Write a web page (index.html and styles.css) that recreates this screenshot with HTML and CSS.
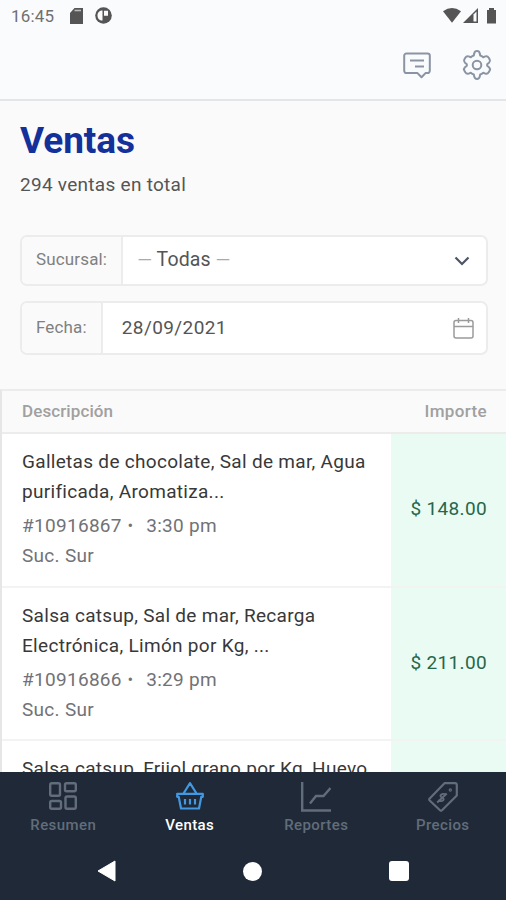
FILE: index.html
```html
<!DOCTYPE html>
<html lang="es">
<head>
    <meta charset="UTF-8">
    <title>Ventas</title>
    <link rel="stylesheet" href="styles.css">
</head>
<body>
    <div id="app">
        <header id="top">
            <div class="status">
                <span class="clock">16:45</span>
                <svg class="sd" width="14" height="16" viewBox="0 0 14 16"><path d="M4.5 0H13v16H0V5z" fill="#555"/><path d="M4.5 2.5H11" stroke="#bbb" stroke-width="1.6"/></svg>
                <svg class="dot" width="17" height="17" viewBox="0 0 17 17"><circle cx="8.5" cy="8.5" r="8.3" fill="#555"/><path d="M7.5 3.5v10C4.500 13.500 2.500 11.500 2.500 8.500S4.500 3.500 7.500 3.500zM9 3.800h4v5H9z" fill="#fafbfd"/></svg>
                <svg class="signals" width="54" height="16" viewBox="0 0 54 16">
                    <path d="M0 3.200Q9 -3 18 3.200L9 14.800z" fill="#555"/>
                    <path d="M20 15L35 0v15z" fill="#555"/>
                    <path d="M30.500 6.500L33.500 3.500V13.500H30.500z" fill="#fafbfd"/>
                    <path d="M44 2h2V0h5v2h2v13.500h-9z" fill="#555"/>
                </svg>
            </div>
            <div class="actions">
                <svg width="28" height="27" viewBox="0 0 28 27" fill="none" stroke="#8b94a3" stroke-width="2" stroke-linejoin="round">
                    <path d="M3.500 1.500h21a2.300 2.300 0 0 1 2.300 2.300v15a2.300 2.300 0 0 1-2.300 2.300H22.500l-4 4.200-4-4.200h-11a2.300 2.300 0 0 1-2.300-2.300v-15a2.300 2.300 0 0 1 2.300-2.300z"/>
                    <path d="M7 8.500h14M12 14.500h9"/>
                </svg>
                <svg width="30" height="30" viewBox="0 0 30 30" fill="none" stroke="#8b94a3" stroke-width="2" stroke-linejoin="round">
                    <path d="M12.300 3.300Q12.700 1 15 1T17.700 3.300L18.200 5.500Q19.800 6 21.200 7.200L23.300 6.400Q25.500 5.700 26.700 7.700L27.700 9.400Q28.600 11.300 27 12.700L25.200 14.200V15.800L27 17.300Q28.600 18.700 27.700 20.600L26.700 22.300Q25.500 24.300 23.300 23.600L21.200 22.800Q19.800 24 18.200 24.500L17.700 26.700Q17.300 29 15 29T12.300 26.700L11.800 24.500Q10.200 24 8.800 22.800L6.700 23.600Q4.500 24.300 3.300 22.300L2.300 20.600Q1.400 18.700 3 17.300L4.800 15.800V14.200L3 12.700Q1.400 11.300 2.300 9.400L3.300 7.700Q4.500 5.700 6.700 6.400L8.800 7.200Q10.200 6 11.800 5.500z"/>
                    <circle cx="15" cy="15" r="4.300"/>
                </svg>
            </div>
        </header>

        <main>
            <div class="heading">
                <h1>Ventas</h1>
                <p>294 ventas en total</p>
            </div>

            <div class="filters">
                <div class="field">
                    <label>Sucursal:</label>
                    <div class="value branch">
                        <span><i>—</i> Todas <i>—</i></span>
                        <svg width="16" height="10" viewBox="0 0 16 10" fill="none" stroke="#4b5563" stroke-width="2.200"><path d="M1.500 1.500L8 8l6.500-6.500"/></svg>
                    </div>
                </div>
                <div class="field date">
                    <label>Fecha:</label>
                    <div class="value">
                        <span>28/09/2021</span>
                        <svg width="21" height="21" viewBox="0 0 21 21" fill="none" stroke="#9b9b9b" stroke-width="1.500"><rect x="1" y="2.500" width="19" height="17.500" rx="2"/><path d="M1 8.500h19M5.500 0v5M15.500 0v5"/></svg>
                    </div>
                </div>
            </div>

            <div class="list">
                <div class="row head">
                    <div class="desc">Descripción</div>
                    <div class="amount">Importe</div>
                </div>
                <div class="row">
                    <div class="desc">
                        <p class="items">Galletas de chocolate, Sal de mar, Agua<br>purificada, Aromatiza...</p>
                        <p>#10916867 <b>•</b> 3:30 pm</p>
                        <p>Suc. Sur</p>
                    </div>
                    <div class="amount">$ 148.00</div>
                </div>
                <div class="row">
                    <div class="desc">
                        <p class="items">Salsa catsup, Sal de mar, Recarga<br>Electrónica, Limón por Kg, ...</p>
                        <p>#10916866 <b>•</b> 3:29 pm</p>
                        <p>Suc. Sur</p>
                    </div>
                    <div class="amount">$ 211.00</div>
                </div>
                <div class="row">
                    <div class="desc">
                        <p class="items">Salsa catsup, Frijol grano por Kg, Huevo</p>
                    </div>
                    <div class="amount"></div>
                </div>
            </div>
        </main>

        <footer>
            <nav class="tabs">
                <a>
                    <svg width="28" height="28" viewBox="0 0 28 28" fill="none" stroke="currentColor" stroke-width="2.400"><rect x="1.200" y="1.200" width="9.800" height="12.500" rx="1.500"/><rect x="16" y="1.200" width="10.800" height="8" rx="1.500"/><rect x="1.200" y="19" width="10.800" height="7.800" rx="1.500"/><rect x="16.500" y="14.500" width="10.300" height="12.300" rx="1.500"/></svg>
                    <span>Resumen</span>
                </a>
                <a class="selected">
                    <svg width="28" height="28" viewBox="0 0 28 28" fill="none" stroke="#4299e1" stroke-width="2.200" stroke-linejoin="round"><path d="M1.200 11.800h25.600v3H25.300L23 26.500H5L2.700 14.800H1.200zM7.500 11.500L14 1.200l6.500 10.300M9 17v5.500M14 17v5.500M19 17v5.500"/></svg>
                    <span>Ventas</span>
                </a>
                <a>
                    <svg width="30" height="30" viewBox="0 0 30 30" fill="none" stroke="currentColor" stroke-width="2.400"><path d="M1.200 0v28.500H30M9 21.500l6-7.500h7.500L29.500 6"/></svg>
                    <span>Reportes</span>
                </a>
                <a>
                    <svg width="30" height="30" viewBox="0 0 30 30" fill="none" stroke="currentColor" stroke-width="2.200" stroke-linejoin="round"><path d="M16.500 1.200H27q1.800 0 1.800 1.800v10.500L14 28.300q-1 1-2 0L1.700 18.500q-1-1 0-2z"/><path d="M18.500 12.500c-5-2-8 1.500-4.500 3s1 5-4 3M18.800 11.500L9.200 20.500" stroke-width="1.900"/><circle cx="22.300" cy="8" r=".6"/></svg>
                    <span>Precios</span>
                </a>
            </nav>
            <div class="system">
                <svg width="19" height="22" viewBox="0 0 19 22"><path d="M18 1v20L1 11z" fill="#fff" stroke="#fff" stroke-linejoin="round"/></svg>
                <span class="home"></span>
                <span class="recent"></span>
            </div>
        </footer>
    </div>
</body>
</html>
```

FILE: styles.css
```css
*{
    margin: 0;
    padding: 0;
    box-sizing: border-box;
}
body{
    font-family: Roboto, "Liberation Sans", sans-serif;
    font-size: 19px;
    color: #555;
    background: #fafafa;
}
svg{
    display: block;
    flex: none;
}
#app{
    height: 900px;
    display: flex;
    flex-direction: column;
    overflow: hidden;
}
#top{
    height: 101px;
    flex: none;
    background: #fafbfd;
    border-bottom: 2px solid #e4e5e7;
}
.status{
    height: 31px;
    padding: 0 9px 0 11px;
    display: flex;
    align-items: center;
}
.clock{
    width: 59px;
    font-size: 17px;
    letter-spacing: 0.2px;
    color: #707070;
}
.dot{
    margin-left: 11px;
}
.signals{
    margin-left: auto;
}
.actions{
    padding: 19px 14px 0 0;
    display: flex;
    justify-content: flex-end;
    align-items: center;
    gap: 31px;
}
main{
    flex: 1;
    min-height: 0;
    overflow: hidden;
}
.heading{
    height: 134px;
    padding: 18px 20px 0;
}
h1{
    font-size: 37px;
    line-height: 44px;
    letter-spacing: -0.1px;
    color: #14309a;
}
.heading p{
    margin-top: 8px;
    line-height: 28px;
    letter-spacing: 0.28px;
}
.filters{
    padding: 0 18px 0 20px;
}
.field{
    height: 51px;
    display: flex;
    background: #fff;
    border: 2px solid #ececec;
    border-radius: 7px;
    overflow: hidden;
}
.date{
    height: 54px;
    margin-top: 15px;
}
.field label{
    padding: 0 14px 3px;
    display: flex;
    align-items: center;
    font-size: 17px;
    letter-spacing: 0.15px;
    color: #808080;
    background: #fafafa;
    border-right: 2px solid #ececec;
}
.value{
    flex: 1;
    padding: 0 12px 0 19px;
    display: flex;
    align-items: center;
    justify-content: space-between;
    letter-spacing: 0.4px;
}
.value span{
    padding-bottom: 2px;
}
.branch{
    padding: 0 16px 0 14px;
}
.branch span{
    font-size: 19.5px;
    letter-spacing: 0.1px;
}
.value i{
    font-style: normal;
    font-size: 19px;
    color: #aaa;
}
.date label{
    padding-bottom: 2px;
}
.list{
    margin-top: 34px;
    border-top: 2px solid #ececec;
    border-left: 2px solid #e6e6e6;
}
.row{
    height: 153.5px;
    display: flex;
    background: #fff;
    border-bottom: 2px solid #f2f4f4;
}
.desc{
    flex: 1;
    padding: 13px 0 0 20px;
    line-height: 30px;
    letter-spacing: 0.3px;
    white-space: nowrap;
    color: #727276;
}
.items{
    margin-bottom: 4px;
    color: #383838;
}
.desc b{
    margin: 0 8px 0 1px;
    font-size: 14px;
    vertical-align: 1px;
}
.amount{
    width: 115px;
    padding: 0 19px 2px 0;
    display: flex;
    align-items: center;
    justify-content: flex-end;
    letter-spacing: 0.35px;
    color: #276749;
    background: #eafbf4;
}
.head{
    height: 43px;
    font-size: 17px;
    font-weight: 500;
    background: #fafafa;
    border-color: #ececec;
}
.head .desc{
    padding-top: 5px;
    letter-spacing: 0.1px;
    color: #a0a0a0;
}
.head .amount{
    color: #a0a0a0;
    background: none;
}
footer{
    height: 128px;
    flex: none;
    background: #1f2937;
}
.tabs{
    height: 70px;
    display: grid;
    grid-template-columns: repeat(4, 1fr);
    color: #626d7b;
}
.tabs a{
    padding: 10px 0 7px;
    display: flex;
    flex-direction: column;
    align-items: center;
    justify-content: space-between;
    font-size: 15px;
    font-weight: 500;
    line-height: 20px;
    letter-spacing: 0.4px;
}
.tabs .selected{
    color: #fff;
}
.system{
    height: 58px;
    padding: 0 97px 0 97px;
    display: flex;
    align-items: center;
    justify-content: space-between;
}
.home{
    width: 19px;
    height: 19px;
    background: #fff;
    border-radius: 50%;
}
.recent{
    width: 20px;
    height: 20px;
    background: #fff;
    border-radius: 3px;
}
```
